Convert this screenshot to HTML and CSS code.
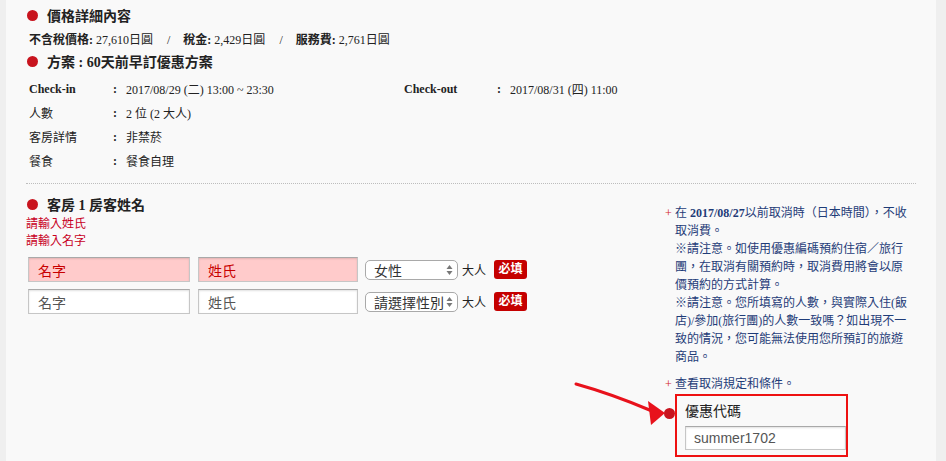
FILE: index.html
```html
<!DOCTYPE html>
<html lang="zh-Hant">
<head>
    <meta charset="UTF-8">
    <title>訂房資料確認</title>
    <link rel="stylesheet" href="styles.css">
</head>
<body>
    <div class="page">
        <div class="section-title"><span class="dot"></span>價格詳細內容</div>
        <p class="price-line">
            <b>不含稅價格:</b> 27,610日圓<span class="sep">/</span><b>稅金:</b> 2,429日圓<span class="sep">/</span><b>服務費:</b> 2,761日圓
        </p>
        <div class="section-title plan"><span class="dot"></span>方案 : 60天前早訂優惠方案</div>

        <table class="stay">
            <tr>
                <th>Check-in</th>
                <td class="colon">:</td>
                <td class="val">2017/08/29 (二) 13:00 ~ 23:30</td>
                <th class="out">Check-out</th>
                <td class="colon">:</td>
                <td>2017/08/31 (四) 11:00</td>
            </tr>
            <tr>
                <td>人數</td>
                <td class="colon">:</td>
                <td colspan="4">2 位 (2 大人)</td>
            </tr>
            <tr>
                <td>客房詳情</td>
                <td class="colon">:</td>
                <td colspan="4">非禁菸</td>
            </tr>
            <tr>
                <td>餐食</td>
                <td class="colon">:</td>
                <td colspan="4">餐食自理</td>
            </tr>
        </table>

        <div class="divider"></div>

        <div class="guest-area">
            <div class="guest-form">
                <div class="section-title"><span class="dot"></span>客房 1 房客姓名</div>
                <p class="error">請輸入姓氏</p>
                <p class="error">請輸入名字</p>

                <div class="guest-row">
                    <input class="name-input invalid" type="text" value="名字">
                    <input class="name-input invalid" type="text" value="姓氏">
                    <div class="select-wrap">
                        <select class="gender">
                            <option>女性</option>
                        </select>
                        <svg class="updown" width="7" height="12" viewBox="0 0 7 12">
                            <path d="M3.5 1 L6.5 5 H0.5 Z M3.5 11 L6.5 7 H0.5 Z" fill="#777"/>
                        </svg>
                    </div>
                    <span class="adult">大人</span>
                    <span class="required">必填</span>
                </div>

                <div class="guest-row">
                    <input class="name-input" type="text" value="名字">
                    <input class="name-input" type="text" value="姓氏">
                    <div class="select-wrap">
                        <select class="gender">
                            <option>請選擇性別</option>
                        </select>
                        <svg class="updown" width="7" height="12" viewBox="0 0 7 12">
                            <path d="M3.5 1 L6.5 5 H0.5 Z M3.5 11 L6.5 7 H0.5 Z" fill="#777"/>
                        </svg>
                    </div>
                    <span class="adult">大人</span>
                    <span class="required">必填</span>
                </div>
            </div>

            <div class="side-notes">
                <div class="note">
                    <span class="plus">+</span>
                    <div class="note-text">
                        在&nbsp;<b>2017/08/27</b>以前取消時（日本時間），不收取消費。<br>
                        ※請注意。如使用優惠編碼預約住宿／旅行團，在取消有關預約時，取消費用將會以原價預約的方式計算。<br>
                        ※請注意。您所填寫的人數，與實際入住(飯店)/參加(旅行團)的人數一致嗎？如出現不一致的情況，您可能無法使用您所預訂的旅遊商品。
                    </div>
                </div>
                <div class="note link">
                    <span class="plus">+</span>
                    <div class="note-text">查看取消規定和條件。</div>
                </div>

                <div class="coupon">
                    <span class="dot"></span>
                    <div class="coupon-box">
                        <div class="coupon-title">優惠代碼</div>
                        <input class="coupon-input" type="text" value="summer1702">
                    </div>
                </div>
            </div>
        </div>

        <!-- red pointer toward the coupon field -->
        <svg class="pointer" width="110" height="60" viewBox="0 0 110 60">
            <path d="M14 14 Q50 24 90 41" fill="none" stroke="#e8121c" stroke-width="3" stroke-linecap="round"/>
            <path d="M86 31 L103 43 L89 55 Z" fill="#e8121c"/>
        </svg>
    </div>
</body>
</html>
```

FILE: styles.css
```css
body {
    margin: 0;
    background: #efefef;
    font-family: "Liberation Serif", "Noto Sans CJK TC", serif;
    color: #222;
    font-size: 12px;
}
.page {
    position: relative;
    margin-left: 6px;
    width: 930px;
    min-height: 461px;
    background: #f9f9f9;
    padding: 5px 20px 0;
    box-sizing: border-box;
}
.section-title {
    display: flex;
    align-items: center;
    gap: 9px;
    height: 20px;
    padding-left: 1px;
    font-size: 14px;
    font-weight: bold;
    color: #222;
}
.dot {
    display: inline-block;
    width: 11px;
    height: 11px;
    border-radius: 50%;
    background: #c8141e;
    flex: none;
}
.price-line {
    margin: 6px 0 2px 3px;
    line-height: 18px;
}
.price-line b {
    font-weight: bold;
}
.sep {
    margin: 0 13px 0 14px;
}
.stay {
    border-collapse: collapse;
    margin: 6px 0 0 3px;
}
.stay th,
.stay td {
    padding: 0;
    height: 24px;
    text-align: left;
    font-weight: normal;
    white-space: nowrap;
}
.stay th {
    font-weight: bold;
}
.stay tr > :first-child {
    width: 84px;
}
.stay .colon {
    width: 13px;
    font-weight: bold;
}
.stay .val {
    width: 278px;
}
.stay .out {
    width: 93px;
}
.divider {
    margin-top: 10px;
    border-top: 1px dotted #bdbdbd;
}
.guest-area {
    display: flex;
    padding-top: 10px;
}
.guest-form {
    width: 640px;
}
.error {
    margin: 0;
    color: #c8001e;
    line-height: 17px;
}
.error:first-of-type {
    margin-top: 2px;
}
.guest-row {
    display: flex;
    align-items: center;
    margin-top: 7px;
    padding-left: 2px;
}
.name-input {
    width: 162px;
    height: 25px;
    box-sizing: border-box;
    margin: 0 8px 0 0;
    padding: 0 9px;
    border: 1px solid #c6c6c6;
    border-top-color: #a9a9a9;
    box-shadow: inset 0 1px 2px rgba(0, 0, 0, 0.12);
    background: #fff;
    font-family: "Noto Sans CJK TC", sans-serif;
    font-size: 14px;
    color: #555;
}
.name-input + .name-input {
    width: 160px;
}
.name-input.invalid {
    background: #ffcbcb;
    color: #c80000;
}
.select-wrap {
    position: relative;
    margin-left: -1px;
}
.gender {
    appearance: none;
    -webkit-appearance: none;
    width: 93px;
    height: 20px;
    box-sizing: border-box;
    padding: 0 0 0 8px;
    border: 1px solid #a9a9a9;
    border-radius: 5px;
    background: #fff;
    font-family: "Noto Sans CJK TC", sans-serif;
    font-size: 14px;
    line-height: 18px;
    color: #333;
}
.updown {
    position: absolute;
    right: 5px;
    top: 4px;
}
.adult {
    margin-left: 4px;
}
.required {
    margin-left: 8px;
    width: 33px;
    height: 19px;
    line-height: 19px;
    text-align: center;
    border-radius: 3px;
    background: #c50000;
    color: #fff;
    font-weight: bold;
}
.side-notes {
    padding-top: 10px;
    margin-left: -1px;
}
.note {
    display: flex;
    color: #1f3c78;
    line-height: 18px;
}
.plus {
    width: 10px;
    flex: none;
    color: #d2232a;
}
.note-text {
    width: 239px;
}
.note.link {
    margin-top: 9px;
}
.coupon {
    display: flex;
    align-items: flex-start;
    margin-top: 1px;
}
.coupon .dot {
    margin-top: 14px;
    margin-left: -1px;
}
.coupon-box {
    width: 173px;
    height: 63px;
    box-sizing: border-box;
    border: 2px solid #ee1111;
    padding: 8px 0 0 8px;
}
.coupon-title {
    font-size: 14px;
    line-height: 16px;
    color: #222;
}
.coupon-input {
    display: block;
    margin-top: 6px;
    width: 161px;
    height: 24px;
    box-sizing: border-box;
    padding: 0 8px;
    border: 1px solid #c6c6c6;
    border-top-color: #a9a9a9;
    box-shadow: inset 0 1px 2px rgba(0, 0, 0, 0.12);
    background: #fff;
    font-family: "Liberation Sans", sans-serif;
    font-size: 14px;
    color: #555;
}
.pointer {
    position: absolute;
    left: 556px;
    top: 370px;
}
```
